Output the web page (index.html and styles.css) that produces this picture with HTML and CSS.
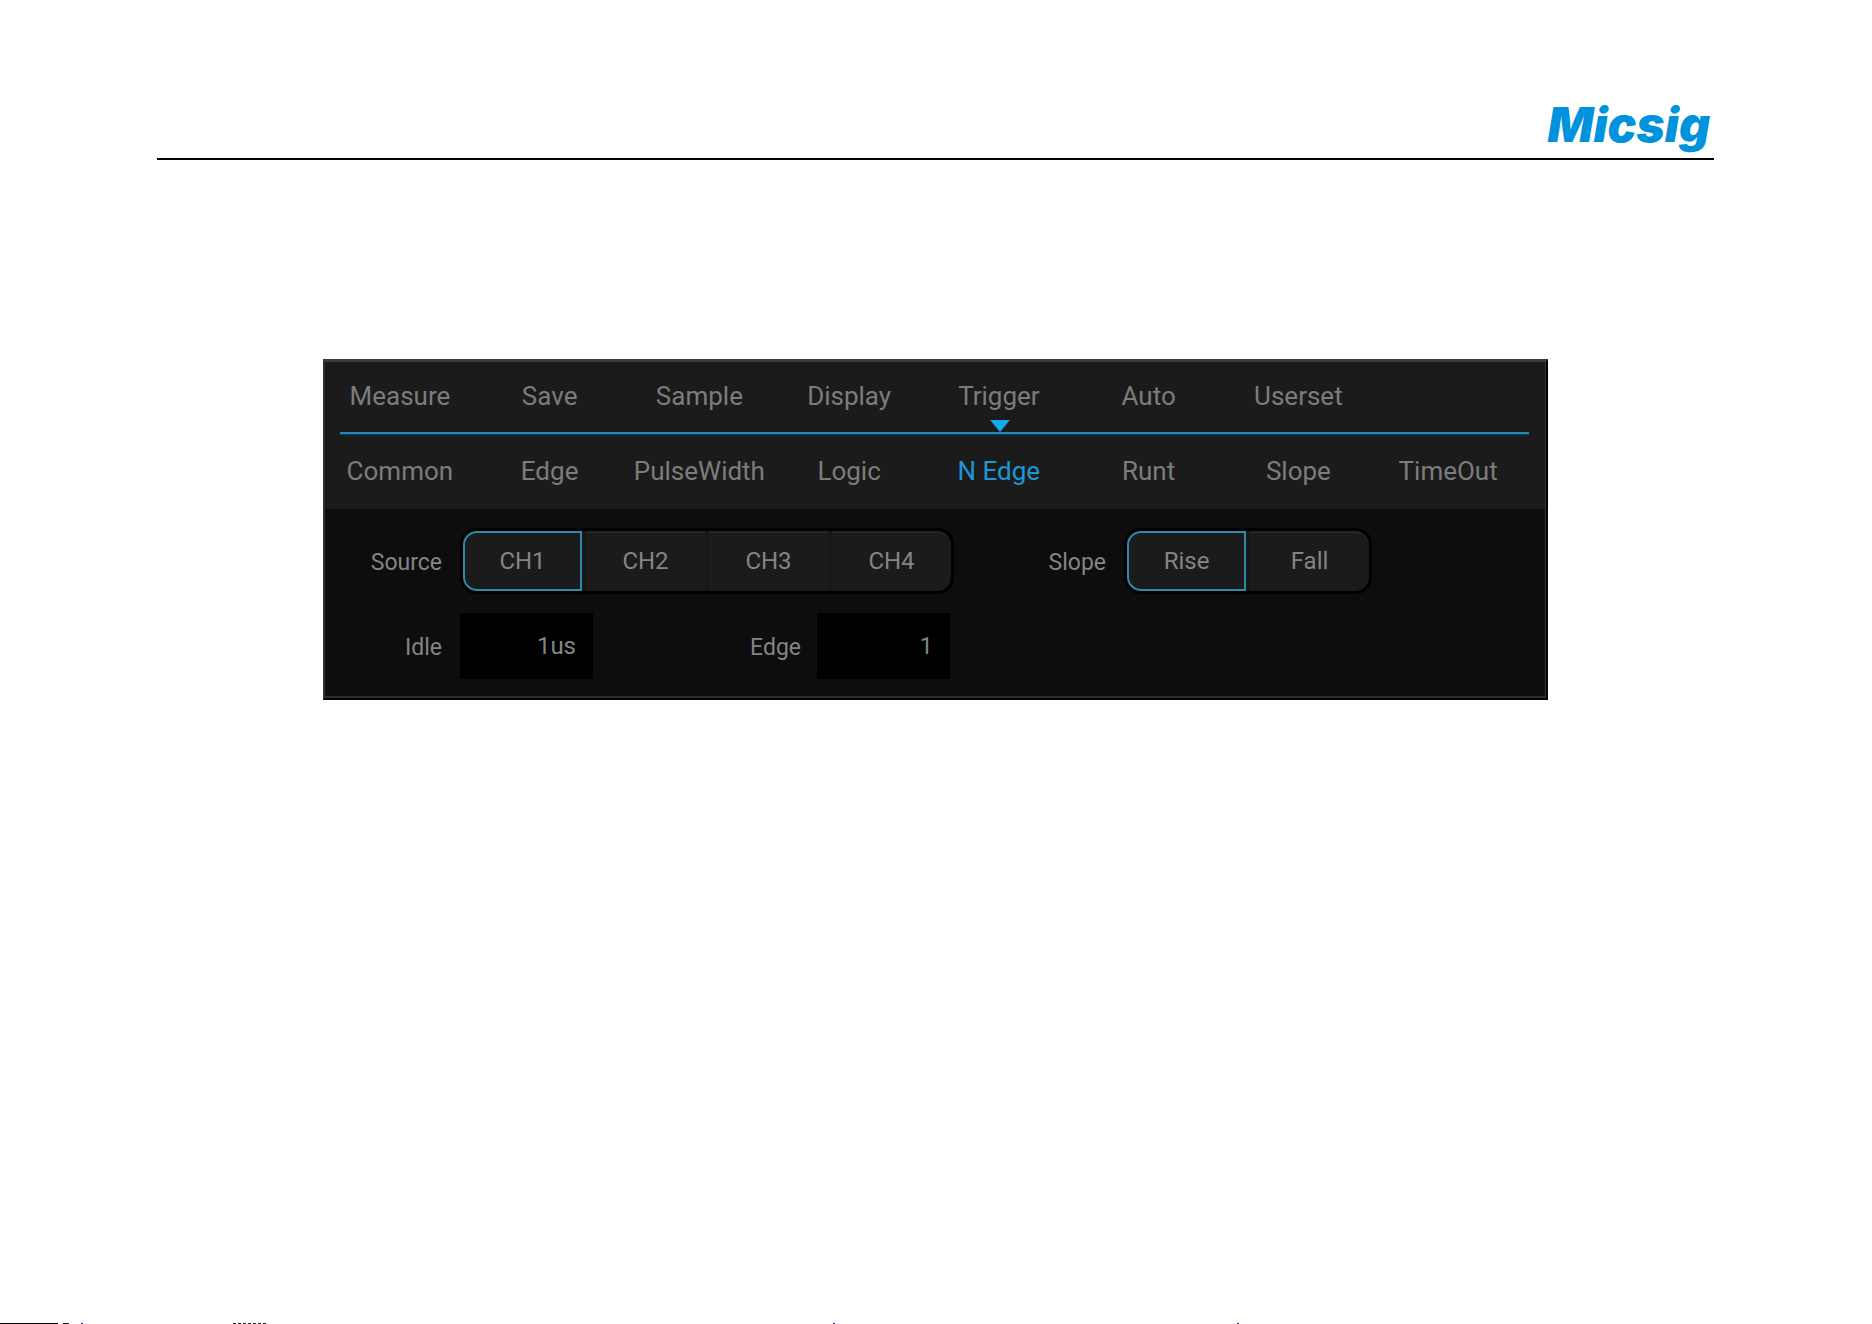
FILE: index.html
```html
<!DOCTYPE html>
<html lang="en">
<head>
  <meta charset="UTF-8" />
  <meta name="viewport" content="width=device-width, initial-scale=1.0" />
  <title>Micsig - N Edge trigger</title>
  <link rel="stylesheet" href="styles.css">
</head>
<body>
  <header class="page-header">
    <span class="logo">Micsig</span>
  </header>

  <main>
    <section class="panel">
      <div class="panel-head">
        <nav class="tabs">
          <button type="button">Measure</button>
          <button type="button">Save</button>
          <button type="button">Sample</button>
          <button type="button">Display</button>
          <button type="button" class="open">Trigger</button>
          <button type="button">Auto</button>
          <button type="button">Userset</button>
        </nav>
        <hr class="divider" />
        <nav class="tabs subtabs">
          <button type="button">Common</button>
          <button type="button">Edge</button>
          <button type="button">PulseWidth</button>
          <button type="button">Logic</button>
          <button type="button" class="active">N Edge</button>
          <button type="button">Runt</button>
          <button type="button">Slope</button>
          <button type="button">TimeOut</button>
        </nav>
      </div>

      <form class="panel-body">
        <div class="row">
          <div class="field first">
            <span class="label" id="source">Source</span>
            <div class="segment" role="group" aria-labelledby="source">
              <button type="button" class="active">CH1</button>
              <button type="button">CH2</button>
              <button type="button">CH3</button>
              <button type="button">CH4</button>
            </div>
          </div>
          <div class="field slope">
            <span class="label" id="slope">Slope</span>
            <div class="segment" role="group" aria-labelledby="slope">
              <button type="button" class="active">Rise</button>
              <button type="button">Fall</button>
            </div>
          </div>
        </div>
        <div class="row">
          <div class="field first">
            <label class="label" for="idle">Idle</label>
            <input type="text" id="idle" value="1us" />
          </div>
          <div class="field edge">
            <label class="label" for="edge">Edge</label>
            <input type="text" id="edge" value="1" />
          </div>
        </div>
      </form>
    </section>
  </main>

  <footer class="page-footer"></footer>

  <script>
    // one active button per group
    document.querySelectorAll(".segment, .subtabs").forEach((group) => {
      group.addEventListener("click", (e) => {
        const button = e.target.closest("button");
        if (!button) return;
        group.querySelector(".active").classList.remove("active");
        button.classList.add("active");
      });
    });
  </script>
</body>
</html>
```
FILE: styles.css
```css
* { box-sizing: border-box; }
body { display: flex; flex-direction: column; min-height: 100vh; margin: 0; background: #fff; font-family: Roboto, sans-serif; }
button, input { font: inherit; color: inherit; border: none; background: none; padding: 0; }
button { cursor: pointer; }

.page-header { display: flex; justify-content: flex-end; align-items: flex-end; height: 160px; margin: 0 158px 0 157px; padding: 0 4px 5px 0; border-bottom: 2px solid #000; }
.logo { color: #0093dd; font: italic 900 48px/56px Inter, sans-serif; }

main { flex: 1; padding: 199px 324px 0 323px; }
.panel { color: #7c7c7c; background: #0d0d0d; border: 2px solid #303030; border-top: 3px solid #3c3c3c; border-right-color: #000; border-bottom-color: #000; }
.panel-head { background: #1b1b1b; border-right: 1px solid #333; }

.tabs { display: grid; grid-template-columns: repeat(8, 1fr); height: 70px; padding-right: 22px; font-size: 26px; line-height: 32px; }
.tabs button { position: relative; padding-bottom: 2px; }
.tabs .active { color: #1a98d6; }
.tabs .open::after { content: ""; position: absolute; left: 50%; bottom: 0; margin-left: -9px; border: 10px solid transparent; border-top: 12px solid #14a9ec; border-bottom: 0; }
.divider { height: 3px; margin: 0 16px 0 15px; border: 0; border-top: 2px solid #2389b3; background: #04406a; }
.subtabs { height: 74px; }

.panel-body { padding: 19px 0 17px; border-right: 1px solid #333; border-bottom: 2px solid #2c2c2c; font-size: 24px; line-height: 28px; color: #848484; }
.row { display: flex; }
.row + .row { margin-top: 19px; }
.field { display: flex; align-items: center; gap: 18px; }
.label { padding-top: 4px; font-size: 23px; text-align: right; }
.first .label { width: 117px; }
.slope .label { width: 152px; }
.edge { gap: 16px; }
.edge .label { width: 208px; }

.segment { display: flex; gap: 4px; padding: 3px; border-radius: 16px; background: #000; }
.segment button { width: 119px; height: 60px; border: solid #262626; border-width: 2px 0; border-bottom-color: #1b1b1b; background: #1b1b1b; box-shadow: 4px 0 #171717; }
.segment button:first-child { border-radius: 14px 0 0 14px; }
.segment button:last-child { border-radius: 0 14px 14px 0; box-shadow: none; }
.segment button.active { border: 2px solid #2f89a8; }
.field input { width: 133px; height: 66px; padding-right: 17px; background: #000; text-align: right; }

.page-footer {
  height: 1px;
  background:
    linear-gradient(#000, #000) 0 0 / 58px 1px no-repeat,
    linear-gradient(#222, #222) 63px 0 / 6px 1px no-repeat,
    linear-gradient(#228, #228) 81px 0 / 2px 1px no-repeat,
    repeating-linear-gradient(90deg, #223 0 3px, #fff 3px 5px) 233px 0 / 34px 1px no-repeat,
    linear-gradient(#228, #228) 833px 0 / 2px 1px no-repeat,
    linear-gradient(#228, #228) 1237px 0 / 2px 1px no-repeat;
}
```
